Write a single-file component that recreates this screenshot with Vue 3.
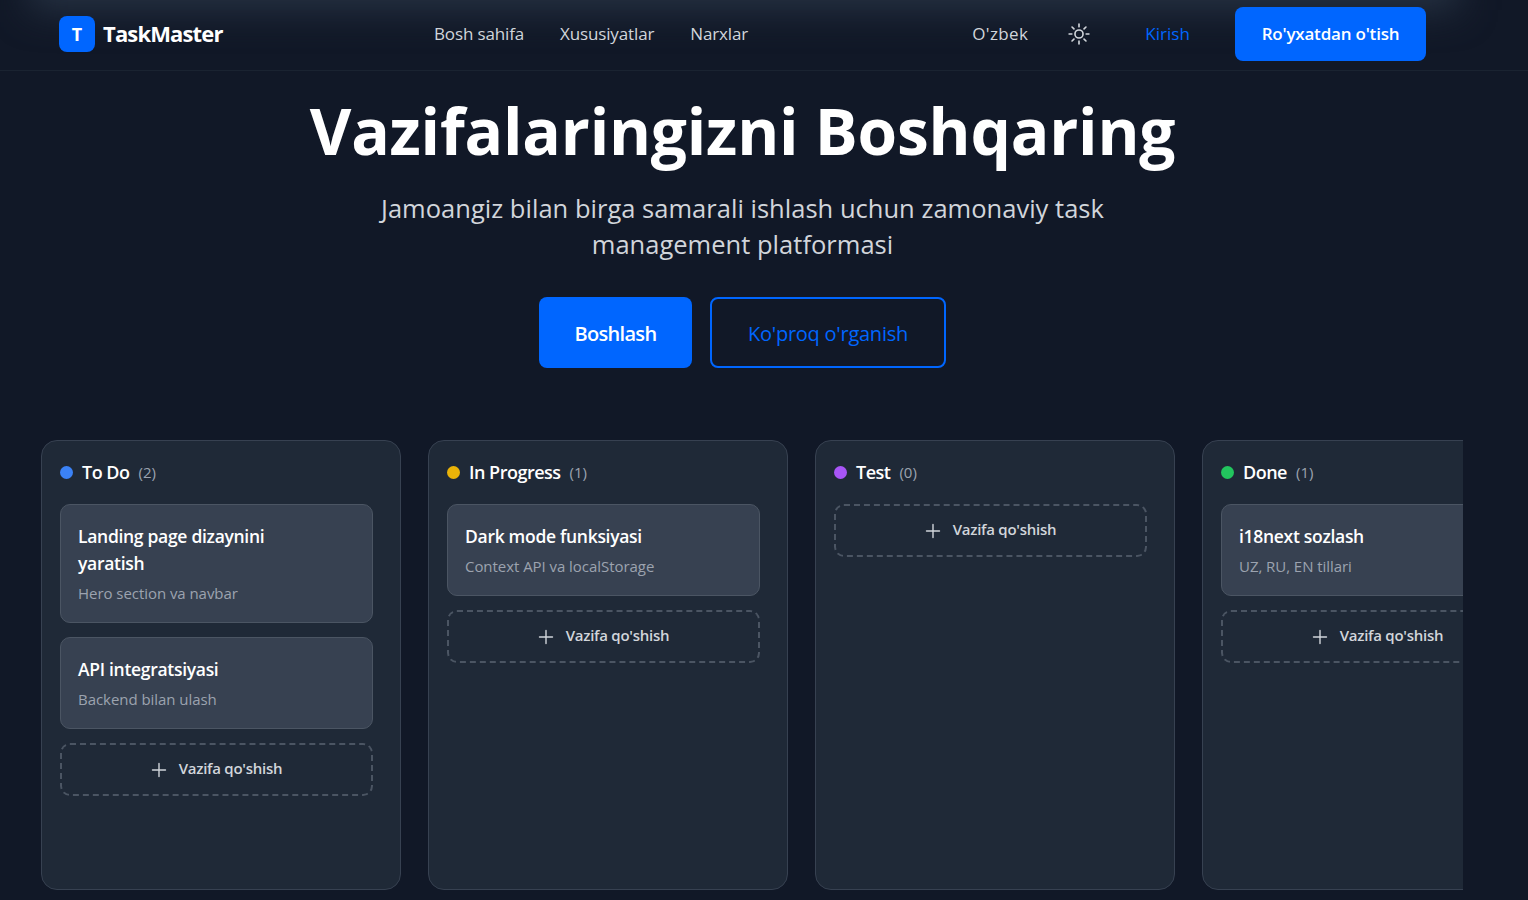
<template>
  <div class="page">
    <nav class="navbar">
      <div class="brand">
        <span class="brand-mark">T</span>
        <span class="brand-name">TaskMaster</span>
      </div>
      <div class="nav-links">
        <a v-for="link in links" :key="link" class="nav-link">{{ link }}</a>
      </div>
      <div class="nav-actions">
        <span class="lang">O'zbek</span>
        <svg class="theme-icon" viewBox="0 0 24 24" fill="none" stroke="currentColor" stroke-width="1.8" stroke-linecap="round">
          <circle cx="12" cy="12" r="4.4" />
          <path d="M12 1.2v3M12 19.8v3M4.4 4.4l2.1 2.1M17.5 17.5l2.1 2.1M1.2 12h3M19.8 12h3M4.4 19.6l2.1-2.1M17.5 6.5l2.1-2.1" />
        </svg>
        <a class="login">Kirish</a>
        <button class="register">Ro'yxatdan o'tish</button>
      </div>
    </nav>

    <header class="hero">
      <h1>Vazifalaringizni Boshqaring</h1>
      <p>Jamoangiz bilan birga samarali ishlash uchun zamonaviy task management platformasi</p>
      <div class="hero-buttons">
        <button class="btn-primary">Boshlash</button>
        <button class="btn-outline">Ko'proq o'rganish</button>
      </div>
    </header>

    <section class="board">
      <div v-for="col in columns" :key="col.title" class="column">
        <div class="column-head">
          <span class="dot" :style="{ background: col.color }"></span>
          <span class="column-title">{{ col.title }}</span>
          <span class="column-count">({{ col.tasks.length }})</span>
        </div>
        <div v-for="task in col.tasks" :key="task.title" class="task">
          <h3>{{ task.title }}</h3>
          <p>{{ task.desc }}</p>
        </div>
        <button class="add-task">
          <svg viewBox="0 0 16 16" fill="none" stroke="currentColor" stroke-width="1.4" stroke-linecap="round">
            <path d="M8 1.5v13M1.5 8h13" />
          </svg>
          <span class="add-label">Vazifa qo'shish</span>
        </button>
      </div>
    </section>
  </div>
</template>

<script setup>
const links = ['Bosh sahifa', 'Xususiyatlar', 'Narxlar']

const columns = [
  {
    title: 'To Do',
    color: '#3b82f6',
    tasks: [
      { title: 'Landing page dizaynini yaratish', desc: 'Hero section va navbar' },
      { title: 'API integratsiyasi', desc: 'Backend bilan ulash' }
    ]
  },
  {
    title: 'In Progress',
    color: '#eab308',
    tasks: [{ title: 'Dark mode funksiyasi', desc: 'Context API va localStorage' }]
  },
  { title: 'Test', color: '#a855f7', tasks: [] },
  {
    title: 'Done',
    color: '#22c55e',
    tasks: [{ title: 'i18next sozlash', desc: 'UZ, RU, EN tillari' }]
  }
]
</script>

<style>
html,
body {
  margin: 0;
  background: #111827;
  overflow: hidden;
}
</style>

<style scoped>
.page {
  width: 1528px;
  height: 900px;
  overflow: hidden;
  font-family: "Open Sans", "Noto Sans", sans-serif;
  color: #fff;
}

.navbar {
  position: relative;
  overflow: hidden;
  box-sizing: border-box;
  height: 71px;
  padding: 0 102px 2px 59px;
  display: flex;
  align-items: center;
  border-bottom: 1px solid #1a2331;
}

/* soft glow along the top edge */
.navbar::before {
  content: '';
  position: absolute;
  top: -42px;
  left: 30px;
  right: 70px;
  height: 52px;
  background: #263243;
  filter: blur(18px);
}

.brand,
.nav-links,
.nav-actions {
  position: relative;
}

.brand {
  width: 375px;
  display: flex;
  align-items: center;
  gap: 8px;
}

.brand-mark {
  width: 36px;
  height: 36px;
  border-radius: 8px;
  background: #0066ff;
  display: flex;
  align-items: center;
  justify-content: center;
  font-size: 18px;
  font-weight: 700;
}

.brand-name {
  font-size: 22px;
  line-height: 28px;
  padding-bottom: 2px;
  font-weight: 700;
  letter-spacing: -0.85px;
}

.nav-links {
  display: flex;
  gap: 36px;
}

.nav-link {
  font-size: 17px;
  line-height: 24px;
  color: #d1d5db;
  letter-spacing: -0.14px;
}

.nav-actions {
  margin-left: auto;
  display: flex;
  align-items: center;
}

.lang {
  font-size: 17px;
  line-height: 24px;
  letter-spacing: 0.35px;
  color: #d1d5db;
}

.theme-icon {
  width: 22px;
  height: 22px;
  margin-left: 40px;
  color: #d1d5db;
}

.login {
  margin-left: 55px;
  font-size: 17px;
  line-height: 24px;
  font-weight: 500;
  letter-spacing: 0.06px;
  color: #0066ff;
}

.register {
  margin-left: 45px;
  width: 191px;
  height: 54px;
  padding: 0 0 2px;
  border: 0;
  border-radius: 8px;
  background: #0066ff;
  color: #fff;
  font: 600 17px "Open Sans", sans-serif;
  letter-spacing: -0.2px;
}

.hero {
  width: 1485px;
  height: 369px;
  text-align: center;
  display: flex;
  flex-direction: column;
  align-items: center;
}

.hero h1 {
  margin: 20px 0 0;
  font-size: 64px;
  line-height: 80px;
  font-weight: 700;
  letter-spacing: -0.2px;
}

.hero p {
  margin: 19px 0 0;
  width: 768px;
  font-size: 25.5px;
  line-height: 36px;
  color: #d1d5db;
  letter-spacing: 0.02px;
}

.hero-buttons {
  margin-top: 35px;
  display: flex;
  gap: 18px;
}

.btn-primary,
.btn-outline {
  height: 71px;
  padding: 2px 0 0;
  border-radius: 8px;
  font: 600 20px "Open Sans", sans-serif;
  letter-spacing: -0.7px;
}

.btn-primary {
  width: 153px;
  border: 0;
  background: #0066ff;
  color: #fff;
}

.btn-outline {
  width: 236px;
  border: 2px solid #0066ff;
  background: transparent;
  color: #0066ff;
  font-weight: 500;
  letter-spacing: -0.25px;
}

.board {
  margin-left: 41px;
  width: 1422px;
  overflow: hidden;
  display: flex;
  gap: 27px;
}

.column {
  flex: 0 0 360px;
  height: 450px;
  box-sizing: border-box;
  padding: 18px 27px 0 18px;
  background: #1f2937;
  border: 1px solid #374151;
  border-radius: 16px;
}

.column-head {
  height: 27px;
  margin-bottom: 18px;
  display: flex;
  align-items: center;
}

.dot {
  width: 13px;
  height: 13px;
  border-radius: 50%;
  margin-right: 9px;
}

.column-title {
  font-size: 18px;
  line-height: 24px;
  padding-bottom: 2px;
  font-weight: 600;
  letter-spacing: -0.5px;
}

.column-count {
  margin-left: 9px;
  font-size: 15px;
  line-height: 22px;
  padding-bottom: 2px;
  color: #9ca3af;
}

.task {
  box-sizing: border-box;
  padding: 18px 18px 18px 17px;
  margin-bottom: 14px;
  background: #374151;
  border: 1px solid #4b5563;
  border-radius: 10px;
}

.task h3 {
  margin: 0 0 6px;
  max-width: 230px;
  font-size: 17.5px;
  line-height: 27px;
  font-weight: 600;
  letter-spacing: -0.3px;
}

.task p {
  margin: 0;
  font-size: 15px;
  line-height: 21px;
  color: #9ca3af;
  letter-spacing: -0.05px;
}

.add-task {
  width: 100%;
  height: 53px;
  box-sizing: border-box;
  padding: 0;
  border: 2px dashed #4b5563;
  border-radius: 10px;
  background: transparent;
  color: #d1d5db;
  display: flex;
  align-items: center;
  justify-content: center;
  gap: 12px;
  font: 600 15px "Open Sans", sans-serif;
  letter-spacing: -0.25px;
}

.add-label {
  padding-bottom: 3px;
}

.add-task svg {
  width: 16px;
  height: 16px;
}
</style>
